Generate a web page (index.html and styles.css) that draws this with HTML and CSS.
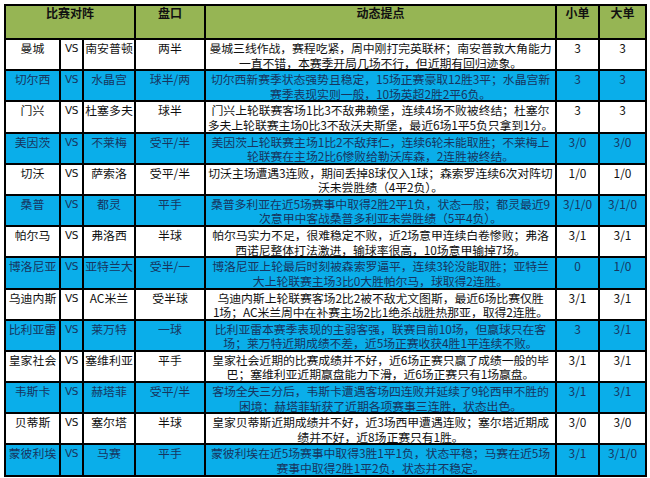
FILE: index.html
```html
<!DOCTYPE html>
<html lang="zh">
<head>
<meta charset="utf-8">
<link rel="stylesheet" href="styles.css">
</head>
<body>
<div class="sheet">
<table class="grid">
  <colgroup>
    <col class="c-home"><col class="c-vs"><col class="c-away"><col class="c-pan"><col class="c-desc"><col class="c-small"><col class="c-big">
  </colgroup>
  <thead>
    <tr class="head">
      <th colspan="3">比赛对阵</th><th>盘口</th><th>动态提点</th><th>小单</th><th>大单</th>
    </tr>
  </thead>
  <tbody>
    <tr>
      <td>曼城</td><td class="vs">VS</td><td>南安普顿</td><td>两半</td>
      <td class="desc"><div class="lines">曼城三线作战，赛程吃紧，周中刚打完英联杯；南安普敦大角能力<br>一直不错，本赛季开局几场不行，但近期有回归迹象。</div></td>
      <td>3</td><td>3</td>
    </tr>
    <tr class="blue">
      <td>切尔西</td><td class="vs">VS</td><td>水晶宫</td><td>球半/两</td>
      <td class="desc"><div class="lines">切尔西新赛季状态强势且稳定，15场正赛豪取12胜3平；水晶宫新<br>赛季表现实则一般，10场英超2胜2平6负。</div></td>
      <td>3</td><td>3</td>
    </tr>
    <tr>
      <td>门兴</td><td class="vs">VS</td><td>杜塞多夫</td><td>球半</td>
      <td class="desc"><div class="lines">门兴上轮联赛客场1比3不敌弗赖堡，连续4场不败被终结；杜塞尔<br>多夫上轮联赛主场0比3不敌沃夫斯堡，最近6场1平5负只拿到1分。</div></td>
      <td>3</td><td>3</td>
    </tr>
    <tr class="blue">
      <td>美因茨</td><td class="vs">VS</td><td>不莱梅</td><td>受平/半</td>
      <td class="desc"><div class="lines">美因茨上轮联赛主场1比2不敌拜仁，连续6轮未能取胜；不莱梅上<br>轮联赛在主场2比6惨败给勒沃库森，2连胜被终结。</div></td>
      <td>3/0</td><td>3/0</td>
    </tr>
    <tr>
      <td>切沃</td><td class="vs">VS</td><td>萨索洛</td><td>受平/半</td>
      <td class="desc"><div class="lines">切沃主场遭遇3连败，期间丢掉8球仅入1球；森索罗连续6次对阵切<br>沃未尝胜绩（4平2负）。</div></td>
      <td>1/0</td><td>1/0</td>
    </tr>
    <tr class="blue">
      <td>桑普</td><td class="vs">VS</td><td>都灵</td><td>平手</td>
      <td class="desc"><div class="lines">桑普多利亚在近5场赛事中取得2胜2平1负，状态一般；都灵最近9<br>次意甲中客战桑普多利亚未尝胜绩（5平4负）。</div></td>
      <td>3/1/0</td><td>3/1/0</td>
    </tr>
    <tr>
      <td>帕尔马</td><td class="vs">VS</td><td>弗洛西</td><td>半球</td>
      <td class="desc"><div class="lines">帕尔马实力不足，很难稳定不败，近2场意甲连续白卷惨败；弗洛<br>西诺尼整体打法激进，输球率很高，10场意甲输掉7场。</div></td>
      <td>3/1</td><td>3/1</td>
    </tr>
    <tr class="blue">
      <td>博洛尼亚</td><td class="vs">VS</td><td>亚特兰大</td><td>受半/一</td>
      <td class="desc"><div class="lines">博洛尼亚上轮最后时刻被森索罗逼平，连续3轮没能取胜；亚特兰<br>大上轮联赛主场3比0大胜帕尔马，球取得2连胜。</div></td>
      <td>0</td><td>1/0</td>
    </tr>
    <tr>
      <td>乌迪内斯</td><td class="vs">VS</td><td>AC米兰</td><td>受半球</td>
      <td class="desc"><div class="lines">乌迪内斯上轮联赛客场2比2被不敌尤文图斯，最近6场比赛仅胜<br>1场；AC米兰周中在补赛主场2比1绝杀战胜热那亚，取得2连胜。</div></td>
      <td>3/1</td><td>3/1</td>
    </tr>
    <tr class="blue">
      <td>比利亚雷</td><td class="vs">VS</td><td>莱万特</td><td>一球</td>
      <td class="desc"><div class="lines">比利亚雷本赛季表现的主弱客强，联赛目前10场，但赢球只在客<br>场；莱万特近期成绩不差，近5场正赛收获4胜1平连续不败。</div></td>
      <td>3</td><td>3/1</td>
    </tr>
    <tr>
      <td>皇家社会</td><td class="vs">VS</td><td>塞维利亚</td><td>平手</td>
      <td class="desc"><div class="lines">皇家社会近期的比赛成绩并不好，近6场正赛只赢了成绩一般的毕<br>巴；塞维利亚近期赢盘能力下滑，近6场正赛只有1场赢盘。</div></td>
      <td>3/1</td><td>3/1</td>
    </tr>
    <tr class="blue">
      <td>韦斯卡</td><td class="vs">VS</td><td>赫塔菲</td><td>受平/半</td>
      <td class="desc"><div class="lines">客场全失三分后，韦斯卡遭遇客场四连败并延续了9轮西甲不胜的<br>困境；赫塔菲斩获了近期各项赛事三连胜，状态出色。</div></td>
      <td>3/1</td><td>3/1</td>
    </tr>
    <tr>
      <td>贝蒂斯</td><td class="vs">VS</td><td>塞尔塔</td><td>半球</td>
      <td class="desc"><div class="lines">皇家贝蒂斯近期成绩并不好，近3场西甲遭遇连败；塞尔塔近期成<br>绩并不好，近8场正赛只有1胜。</div></td>
      <td>3/0</td><td>3/0</td>
    </tr>
    <tr class="blue">
      <td>蒙彼利埃</td><td class="vs">VS</td><td>马赛</td><td>平手</td>
      <td class="desc"><div class="lines">蒙彼利埃在近5场赛事中取得3胜1平1负，状态平稳；马赛在近5场<br>赛事中取得2胜1平2负，状态并不稳定。</div></td>
      <td>3/1</td><td>3/1/0</td>
    </tr>
  </tbody>
</table>
</div>
</body>
</html>
```

FILE: styles.css
```css
html, body {
  margin: 0;
  padding: 0;
  background: #ffffff;
}

.sheet {
  padding: 4px 0 0 4px;
  width: 650px;
  height: 478px;
  box-sizing: border-box;
  overflow: hidden;
  font-family: "Noto Sans CJK SC", "Noto Sans", sans-serif;
}

.grid {
  border-collapse: collapse;
  table-layout: fixed;
  width: 641px;
  font-size: 11.9px;
  color: #111;
}

.c-home { width: 55px; }
.c-vs { width: 23px; }
.c-away { width: 52px; }
.c-pan { width: 70px; }
.c-desc { width: 351px; }
.c-small { width: 43px; }
.c-big { width: 47px; }

.grid th,
.grid td {
  border: 2px solid #000;
  padding: 0;
  text-align: center;
  vertical-align: top;
  white-space: nowrap;
  line-height: 14.5px;
}

.head th {
  height: 32px;
  background: #96b554;
  font-weight: bold;
  font-size: 12px;
  padding-top: 0;
  color: #111;
}

.grid tbody td {
  height: 28.2px;
  padding-top: 1px;
}

.grid td.desc {
  letter-spacing: -0.1px;
}

.lines {
  height: 26px;
  overflow: visible;
}

.grid td.vs {
  font-size: 10.5px;
  font-family: "DejaVu Sans", sans-serif;
  letter-spacing: -0.3px;
}

.blue td {
  background: #0aaeea;
  color: #17355f;
}
```
